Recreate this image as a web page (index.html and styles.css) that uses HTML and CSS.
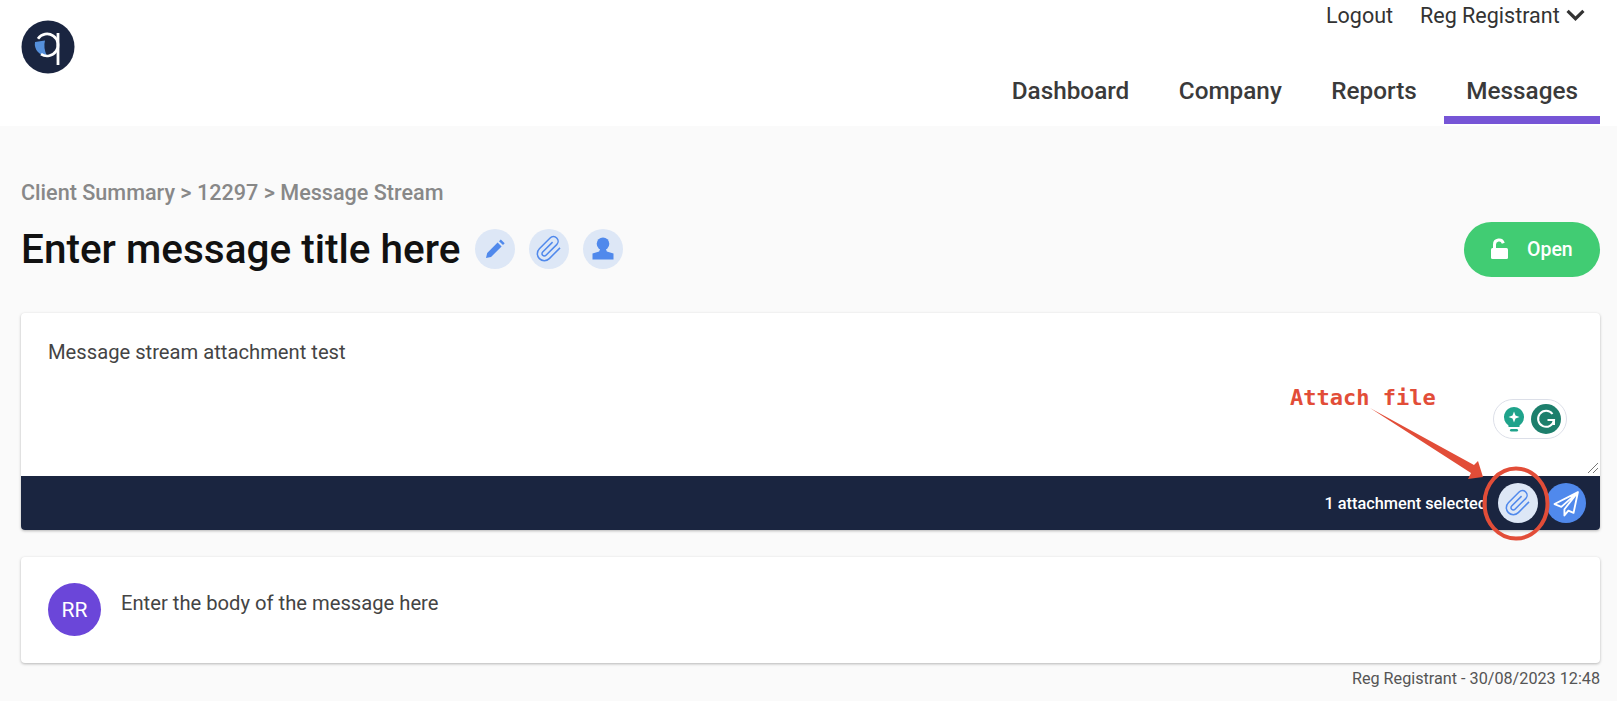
FILE: index.html
```html
<!DOCTYPE html>
<html lang="en">
<head>
  <meta charset="UTF-8" />
  <meta name="viewport" content="width=device-width, initial-scale=1.0"/>
  <title>Message Stream</title>
  <link rel="stylesheet" href="styles.css">
</head>
<body>

<header>
  <a class="logo" href="#">
    <svg viewBox="0 0 54 54" width="54" height="54">
      <circle cx="27" cy="27" r="26.500" fill="#1a2540"/>
      <path d="M14 22 24 20.500Q22 28 26 36A12 12 0 0 1 14 22Z" fill="#5590dc"/>
      <path d="M17 18.700A11 11 0 1 1 20 34.200" fill="none" stroke="#fff" stroke-width="2.700"/>
      <path d="M37 13V45" stroke="#fff" stroke-width="2.800"/>
    </svg>
  </a>
  <div class="header-right">
    <div class="user-links">
      <a href="#">Logout</a>
      <a href="#" class="user-menu">Reg Registrant
        <svg viewBox="0 0 18 11" width="19" height="12"><path d="M1.500 1.500 9 9l7.500-7.500" fill="none" stroke="#333" stroke-width="3"/></svg>
      </a>
    </div>
    <nav>
      <a href="#">Dashboard</a>
      <a href="#">Company</a>
      <a href="#">Reports</a>
      <a href="#" class="active">Messages</a>
    </nav>
  </div>
</header>

<main>
  <div class="breadcrumb">Client Summary &gt; 12297 &gt; Message Stream</div>

  <div class="title-row">
    <h1>Enter message title here</h1>
    <span class="round-btn">
      <svg viewBox="0 0 24 24" width="24" height="24"><path d="M3 21l1.200-5L14.600 5.600l4 3.800L8 20zM16 4.200l1.800-1.700 3.900 3.800L20 8z" fill="#5089ec"/></svg>
    </span>
    <span class="round-btn">
      <svg viewBox="0 0 24 24" width="28" height="28"><path d="M21.440 11.050l-9.190 9.190a6 6 0 0 1-8.490-8.490l9.190-9.190a4 4 0 0 1 5.660 5.660l-9.200 9.190a2 2 0 0 1-2.830-2.830l8.490-8.480" fill="none" stroke="#5089ec" stroke-width="1.300"/></svg>
    </span>
    <span class="round-btn">
      <svg viewBox="0 0 24 24" width="28" height="28"><circle cx="12" cy="7.500" r="5.400" fill="#5089ec"/><path d="M9.500 12h5l.8 2.200 5.700 1.600V21H3v-5.200l5.700-1.600z" fill="#5089ec"/></svg>
    </span>
    <a href="#" class="status-btn">
      <svg viewBox="0 0 20 22" width="20" height="22"><path d="M4.500 10V6.500a4.500 4.500 0 0 1 8.800-1.300" fill="none" stroke="#fff" stroke-width="3"/><rect x="1" y="10" width="17" height="11" rx="1.500" fill="#fff"/></svg>
      Open
    </a>
  </div>

  <section class="card compose">
    <div class="compose-body">
      Message stream attachment test
      <div class="grammarly">
        <svg viewBox="0 0 24 28" width="24" height="28"><path d="M12 2a10 10 0 0 0-5.500 18.400V22h11v-1.600A10 10 0 0 0 12 2z" fill="#1fa38b"/><path d="M12 6.500l1.500 4 4 1.500-4 1.500-1.500 4-1.500-4-4-1.500 4-1.500z" fill="#fff"/><rect x="8" y="24" width="8" height="2.500" rx="1.200" fill="#1fa38b"/></svg>
        <svg viewBox="0 0 30 30" width="30" height="30"><circle cx="15" cy="15" r="15" fill="#1d7f6c"/><path d="M21.500 10a8 8 0 1 0 1.500 6h-6.500M23 16v5" fill="none" stroke="#fff" stroke-width="2"/></svg>
      </div>
      <svg class="resize-grip" viewBox="0 0 12 12" width="12" height="12"><path d="M1 11 11 1M6 11l5-5" stroke="#777" stroke-width="1"/></svg>
    </div>
    <div class="compose-bar">
      <span class="attach-note">1 attachment selected</span>
      <span class="round-btn attach">
        <svg viewBox="0 0 24 24" width="28" height="28"><path d="M21.440 11.050l-9.190 9.190a6 6 0 0 1-8.490-8.490l9.190-9.190a4 4 0 0 1 5.660 5.660l-9.200 9.190a2 2 0 0 1-2.830-2.830l8.490-8.480" fill="none" stroke="#5089ec" stroke-width="1.300"/></svg>
      </span>
      <span class="round-btn send">
        <svg viewBox="0 0 26 26" width="27" height="27"><path d="M24 2 1.500 13.500l6.500 2.800L24 2 11 18.500v6l3.800-4.600 5 2.100z" fill="none" stroke="#fff" stroke-width="1.800" stroke-linejoin="round"/></svg>
      </span>
    </div>
  </section>

  <section class="card message">
    <div class="avatar">RR</div>
    <p>Enter the body of the message here</p>
  </section>
  <div class="message-meta">Reg Registrant - 30/08/2023 12:48</div>
</main>

<!-- annotation drawn over the screenshot -->
<div class="annotation-text">Attach file</div>
<svg class="annotation" viewBox="0 0 1617 701" width="1617" height="701">
  <path d="M1370 408 1474 465 1478 461 1483 477 1468 479 1471 473Z" fill="#e24d38"/>
  <ellipse cx="1516" cy="503.500" rx="31.500" ry="35" fill="none" stroke="#e24d38" stroke-width="4"/>
</svg>

</body>
</html>
```

FILE: styles.css
```css
* { box-sizing: border-box; }
body {
  margin: 0;
  height: 701px;
  overflow: hidden;
  font-family: Roboto, sans-serif;
  background: #fafafa;
  color: #333;
}

a {
  color: inherit;
  text-decoration: none;
}

header {
  display: flex;
  justify-content: space-between;
  height: 126px;
  padding: 0 17px 2px 21px;
  background: #fff;
}

.logo {
  margin-top: 20px;
  height: 54px;
}

.header-right {
  display: flex;
  flex-direction: column;
  align-items: flex-end;
  justify-content: space-between;
}

.user-links {
  display: flex;
  gap: 27px;
  padding: 4px 15px 0 0;
  font-size: 21.500px;
  line-height: 24px;
}

.user-menu svg {
  margin-left: 1px;
  vertical-align: 2px;
}

nav {
  display: flex;
  gap: 5.500px;
  font-size: 24.300px;
  font-weight: 500;
  color: #3a3a3a;
}

nav a {
  padding: 0 22px 10px;
  line-height: 31px;
  border-bottom: 8px solid transparent;
}

nav a.active {
  border-bottom-color: #7655d6;
}

main {
  padding: 54px 17px 0 21px;
}

.breadcrumb {
  font-size: 21.600px;
  font-weight: 500;
  line-height: 26px;
  color: #888;
}

.title-row {
  display: flex;
  align-items: center;
  gap: 14px;
  margin-top: 15px;
  height: 56px;
}

h1 {
  margin: 0 1px 0 0;
  font-size: 40.500px;
  font-weight: 500;
  color: #111;
}

.round-btn {
  display: flex;
  align-items: center;
  justify-content: center;
  flex: none;
  width: 40px;
  height: 40px;
  border-radius: 50%;
  background: #dde7f6;
}

.status-btn {
  display: flex;
  align-items: center;
  gap: 17px;
  margin-left: auto;
  width: 136px;
  height: 55px;
  padding-left: 26px;
  border-radius: 28px;
  background: #41cc73;
  color: #fff;
  font-size: 19.500px;
  font-weight: 500;
}

.card {
  background: #fff;
  border-radius: 4px;
  box-shadow: 0 1px 3px rgba(0,0,0,0.28);
}

.compose {
  margin-top: 36px;
  overflow: hidden;
}

.compose-body {
  position: relative;
  height: 163px;
  padding: 27px 27px;
  font-size: 20.200px;
  line-height: 24px;
  color: #444;
}

.grammarly {
  position: absolute;
  top: 86px;
  right: 33px;
  display: flex;
  align-items: center;
  gap: 5px;
  width: 74px;
  height: 40px;
  padding-left: 8px;
  background: #fff;
  border: 1px solid #dcdfe8;
  border-radius: 20px;
}

.resize-grip {
  position: absolute;
  right: 1px;
  bottom: 2px;
}

.compose-bar {
  display: flex;
  align-items: center;
  justify-content: flex-end;
  gap: 8px;
  height: 54px;
  padding-right: 14px;
  background: #1a2540;
  color: #fff;
  font-size: 16.300px;
  font-weight: 500;
}

.attach-note {
  margin-right: 3px;
}

.send {
  background: #5089ec;
}

.message {
  display: flex;
  gap: 20px;
  align-items: flex-start;
  margin-top: 27px;
  height: 106px;
  padding: 26px 27px;
}

.avatar {
  display: flex;
  align-items: center;
  justify-content: center;
  flex: none;
  width: 53px;
  height: 53px;
  border-radius: 50%;
  background: #6b46d9;
  color: #fff;
  font-size: 21px;
}

.message p {
  margin: 8px 0 0 0;
  font-size: 20.200px;
  line-height: 24px;
  color: #444;
}

.message-meta {
  margin-top: 6px;
  text-align: right;
  font-size: 16.200px;
  line-height: 20px;
  color: #555;
}

.annotation {
  position: absolute;
  top: 0;
  left: 0;
  pointer-events: none;
}

.annotation-text {
  position: absolute;
  top: 384px;
  left: 1290px;
  font-family: "DejaVu Sans Mono", monospace;
  font-size: 22px;
  font-weight: bold;
  line-height: 28px;
  color: #e24d38;
}
```
